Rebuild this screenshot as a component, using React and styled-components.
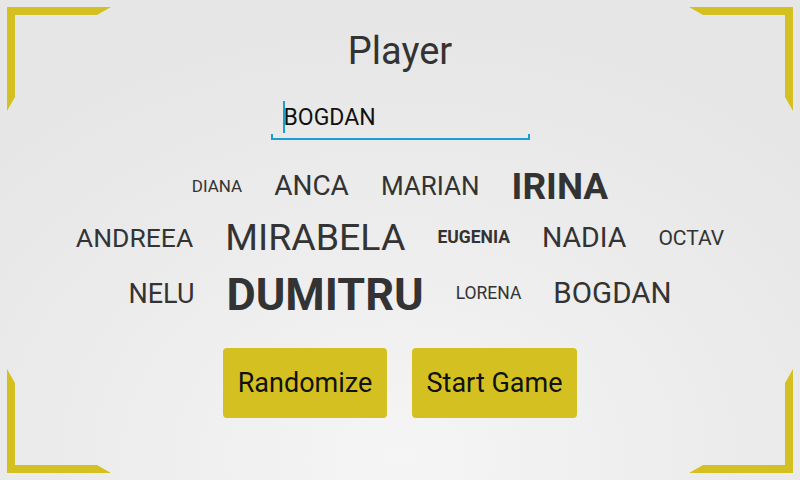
import styled, { createGlobalStyle } from "styled-components"

const Yellow = "#d4c121"
const Blue = "#1a9fd4"

const GlobalStyle = createGlobalStyle`
  html, body {
    margin: 0;
    padding: 0;
  }
  body {
    font-family: Roboto, "Liberation Sans", sans-serif;
  }
`

const Screen = styled.div`
  position: relative;
  width: 800px;
  height: 480px;
  overflow: hidden;
  background: radial-gradient(ellipse 70% 90% at 50% 95%, #f5f5f5 0%, #ededed 50%, #e6e6e6 100%);
  display: flex;
  flex-direction: column;
  align-items: center;
  padding-top: 29px;
  box-sizing: border-box;
`

const Corner = styled.svg`
  position: absolute;
  width: 111px;
  height: 111px;
  ${(p) => (p.$top ? "top: 0;" : "bottom: 0;")}
  ${(p) => (p.$left ? "left: 0;" : "right: 0;")}
  transform: scale(${(p) => (p.$left ? 1 : -1)}, ${(p) => (p.$top ? 1 : -1)});
`

const Title = styled.h1`
  margin: 0;
  font-size: 38px;
  line-height: 44px;
  font-weight: 400;
  color: #333;
`

const Field = styled.div`
  position: relative;
  width: 259px;
  height: 38px;
  margin-top: 29px;
  padding-left: 12px;
  box-sizing: border-box;
  display: flex;
  align-items: flex-start;
  &::after {
    content: "";
    position: absolute;
    left: 0;
    right: 0;
    bottom: 0;
    height: 4px;
    border: 2px solid ${Blue};
    border-top: none;
  }
`

const Cursor = styled.span`
  width: 2px;
  height: 32px;
  margin-top: -1px;
  background: ${Blue};
`

const FieldText = styled.span`
  font-size: 23px;
  line-height: 32px;
  color: #111;
  margin-left: -1px;
`

const Cloud = styled.div`
  margin-top: 20px;
  display: flex;
  flex-direction: column;
  align-items: center;
`

const Row = styled.div`
  display: flex;
  align-items: center;
  justify-content: center;
  gap: 32px;
  height: ${(p) => p.$h}px;
`

const Name = styled.span`
  font-size: ${(p) => p.$size}px;
  font-weight: ${(p) => (p.$bold ? 700 : 400)};
  color: #333;
  line-height: 1;
  white-space: nowrap;
`

const Buttons = styled.div`
  margin-top: 24px;
  display: flex;
  gap: 25px;
`

const Button = styled.button`
  width: ${(p) => p.$w}px;
  height: 70px;
  border: none;
  border-radius: 4px;
  background: ${Yellow};
  color: #111;
  font-family: Roboto, "Liberation Sans", sans-serif;
  font-size: 27px;
  padding: 0;
`

const rows = [
  { h: 52, names: [["DIANA", 17], ["ANCA", 28], ["MARIAN", 26], ["IRINA", 37, true]] },
  { h: 52, names: [["ANDREEA", 26.5], ["MIRABELA", 37.5], ["EUGENIA", 17.5, true], ["NADIA", 28.5], ["OCTAV", 21]] },
  { h: 60, names: [["NELU", 27], ["DUMITRU", 45, true], ["LORENA", 17.5], ["BOGDAN", 29.5]] },
]

function Bracket(props) {
  return (
    <Corner viewBox="0 0 111 111" {...props}>
      <polygon points="7,7 111,7 97,15 15,15 15,97 7,111" fill={Yellow} />
    </Corner>
  )
}

export default function App() {
  return (
    <>
      <GlobalStyle />
      <Screen>
        <Bracket $top $left />
        <Bracket $top />
        <Bracket $left />
        <Bracket />
        <Title>Player</Title>
        <Field>
          <Cursor />
          <FieldText>BOGDAN</FieldText>
        </Field>
        <Cloud>
          {rows.map((row, i) => (
            <Row key={i} $h={row.h}>
              {row.names.map(([n, s, b]) => (
                <Name key={n} $size={s} $bold={b}>{n}</Name>
              ))}
            </Row>
          ))}
        </Cloud>
        <Buttons>
          <Button $w={164}>Randomize</Button>
          <Button $w={165}>Start Game</Button>
        </Buttons>
      </Screen>
    </>
  )
}
